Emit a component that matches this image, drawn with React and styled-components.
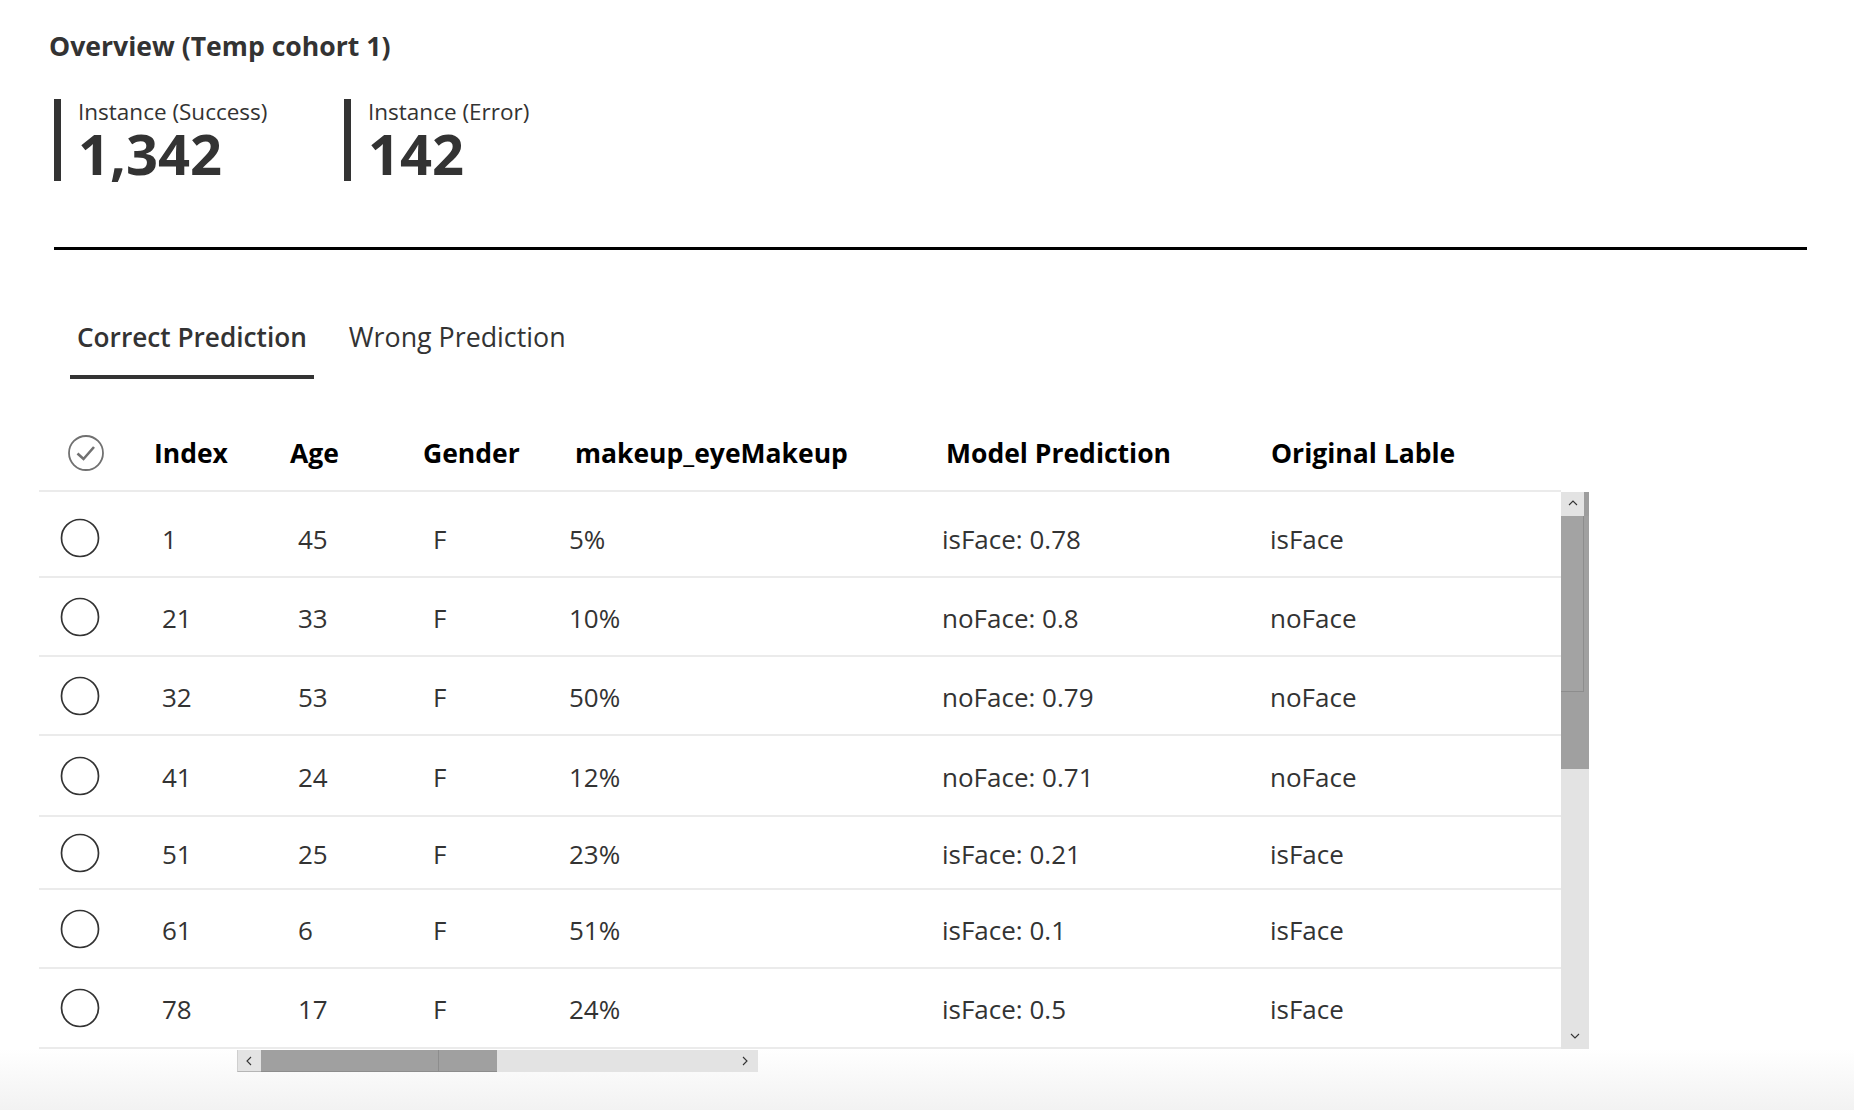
import React from "react";
import styled, { createGlobalStyle } from "styled-components";

const GlobalStyle = createGlobalStyle`
  html, body {
    margin: 0;
    padding: 0;
    background: #fff;
  }
  body {
    font-family: "Open Sans", "Noto Sans", sans-serif;
    color: #333;
  }
`;

const rows = [
  { id: 1, age: 45, gender: "F", makeup: "5%", pred: "isFace: 0.78", label: "isFace", h: 78 },
  { id: 21, age: 33, gender: "F", makeup: "10%", pred: "noFace: 0.8", label: "noFace", h: 79 },
  { id: 32, age: 53, gender: "F", makeup: "50%", pred: "noFace: 0.79", label: "noFace", h: 79 },
  { id: 41, age: 24, gender: "F", makeup: "12%", pred: "noFace: 0.71", label: "noFace", h: 81 },
  { id: 51, age: 25, gender: "F", makeup: "23%", pred: "isFace: 0.21", label: "isFace", h: 73 },
  { id: 61, age: 6, gender: "F", makeup: "51%", pred: "isFace: 0.1", label: "isFace", h: 79 },
  { id: 78, age: 17, gender: "F", makeup: "24%", pred: "isFace: 0.5", label: "isFace", h: 80 },
];

const CheckCircle = () => (
  <svg width="38" height="38" viewBox="0 0 38 38">
    <circle cx="19" cy="19" r="17" fill="none" stroke="#717171" strokeWidth="1.8" />
    <path d="M10.5 19.5 L16.5 25 L27 13" fill="none" stroke="#717171" strokeWidth="2.6" />
  </svg>
);

const EmptyCircle = () => (
  <svg width="40" height="40" viewBox="0 0 40 40">
    <circle cx="20" cy="20" r="18.5" fill="none" stroke="#333" strokeWidth="1.7" />
  </svg>
);

const Caret = ({ dir }) => {
  const d = {
    up: "M1 6 L5 2 L9 6",
    down: "M1 2 L5 6 L9 2",
    left: "M6 1 L2 5 L6 9",
    right: "M2 1 L6 5 L2 9",
  }[dir];
  return (
    <svg width="10" height="10" viewBox="0 0 10 10">
      <path d={d} fill="none" stroke="#333" strokeWidth="1.1" />
    </svg>
  );
};

const App = () => {
  return (
    <Page>
      <GlobalStyle />
      <Title>Overview (Temp cohort 1)</Title>
      <Stats>
        <Stat>
          <StatLabel>Instance (Success)</StatLabel>
          <StatValue>1,342</StatValue>
        </Stat>
        <Stat>
          <StatLabel>Instance (Error)</StatLabel>
          <StatValue>142</StatValue>
        </Stat>
      </Stats>
      <Divider />
      <Tabs>
        <Tab $active>Correct Prediction</Tab>
        <Tab>Wrong Prediction</Tab>
      </Tabs>
      <Table>
        <HeadRow>
          <SelectCell $pad={28}>
            <CheckCircle />
          </SelectCell>
          <HeadCell>Index</HeadCell>
          <HeadCell>Age</HeadCell>
          <HeadCell>Gender</HeadCell>
          <HeadCell>makeup_eyeMakeup</HeadCell>
          <HeadCell>Model Prediction</HeadCell>
          <HeadCell>Original Lable</HeadCell>
        </HeadRow>
        <BodyWrap>
          <Rows>
            {rows.map((r) => (
              <Row key={r.id} $h={r.h}>
                <SelectCell $pad={21}>
                  <EmptyCircle />
                </SelectCell>
                <Cell>{r.id}</Cell>
                <Cell>{r.age}</Cell>
                <Cell>{r.gender}</Cell>
                <Cell>{r.makeup}</Cell>
                <Cell>{r.pred}</Cell>
                <Cell>{r.label}</Cell>
              </Row>
            ))}
          </Rows>
          <VScroll>
            <VButton $strip>
              <Caret dir="up" />
            </VButton>
            <VThumbArea>
              <VThumb />
            </VThumbArea>
            <Track />
            <VButton>
              <Caret dir="down" />
            </VButton>
          </VScroll>
        </BodyWrap>
      </Table>
      <Footer>
        <HScroll>
          <HButton $edge>
            <Caret dir="left" />
          </HButton>
          <HThumb>
            <HThumbPart />
          </HThumb>
          <Track />
          <HButton>
            <Caret dir="right" />
          </HButton>
        </HScroll>
      </Footer>
    </Page>
  );
};

export default App;

const Page = styled.div`
  width: 1854px;
  height: 1110px;
  display: flex;
  flex-direction: column;
  overflow: hidden;
`;

const Title = styled.h2`
  margin: 30px 0 0 49px;
  font-size: 26.6px;
  font-weight: 700;
  line-height: 32px;
  color: #333;
`;

const Stats = styled.div`
  display: flex;
  margin: 37px 0 0 54px;
`;

const Stat = styled.div`
  width: 266px;
  border-left: 7px solid #333;
  padding-left: 17px;
`;

const StatLabel = styled.div`
  font-size: 22.5px;
  line-height: 26px;
  color: #333;
`;

const StatValue = styled.div`
  font-size: 56px;
  font-weight: 700;
  line-height: 56px;
  color: #333;
`;

const Divider = styled.div`
  margin: 66px 0 0 54px;
  width: 1753px;
  height: 3px;
  background: #000;
`;

const Tabs = styled.div`
  display: flex;
  gap: 28px;
  margin: 69px 0 0 70px;
`;

const Tab = styled.div`
  padding: 0 7px 20px;
  font-size: ${(p) => (p.$active ? "26.2px" : "26.8px")};
  line-height: 36px;
  color: #333;
  font-weight: ${(p) => (p.$active ? 600 : 400)};
  border-bottom: 4px solid ${(p) => (p.$active ? "#333" : "transparent")};
`;

const Table = styled.div`
  margin: 37px 0 0 39px;
  width: 1550px;
`;

const HeadRow = styled.div`
  display: grid;
  grid-template-columns: 115px 136px 133px 152px 371px 325px 1fr;
  align-items: center;
  width: 1522px;
  height: 74px;
  border-bottom: 2px solid #ebebeb;
`;

const HeadCell = styled.div`
  font-size: 26.5px;
  font-weight: 700;
  color: #000;
  white-space: nowrap;
`;

const SelectCell = styled.div`
  display: flex;
  align-items: center;
  padding-left: ${(p) => p.$pad}px;
`;

const BodyWrap = styled.div`
  display: flex;
`;

const Rows = styled.div`
  width: 1522px;
  padding-top: 8px;
`;

const Row = styled.div`
  display: grid;
  grid-template-columns: 123px 136px 135px 136px 373px 328px 1fr;
  align-items: center;
  box-sizing: border-box;
  height: ${(p) => p.$h}px;
  border-bottom: 2px solid #ebebeb;
`;

const Cell = styled.div`
  font-size: 26px;
  color: #333;
  white-space: nowrap;
  padding-top: 2px;
`;

const VScroll = styled.div`
  width: 28px;
  display: flex;
  flex-direction: column;
  background: #e3e3e3;
`;

const VButton = styled.div`
  height: 24px;
  display: flex;
  align-items: center;
  justify-content: center;
  box-sizing: border-box;
  border-right: ${(p) => (p.$strip ? "5px solid #9d9d9d" : "0")};
`;

const VThumbArea = styled.div`
  height: 253px;
  background: #a0a0a0;
`;

const VThumb = styled.div`
  width: 22px;
  height: 175px;
  border-right: 1px solid #8d8d8d;
  border-bottom: 1px solid #8d8d8d;
  background: #a3a3a3;
`;

const Track = styled.div`
  flex: 1;
`;

const Footer = styled.div`
  flex: 1;
  background: linear-gradient(#ffffff, #f2f2f2);
  padding-top: 1px;
`;

const HScroll = styled.div`
  display: flex;
  margin-left: 237px;
  width: 521px;
  height: 22px;
  background: #e3e3e3;
`;

const HButton = styled.div`
  width: 24px;
  display: flex;
  align-items: center;
  justify-content: center;
  box-sizing: border-box;
  border-bottom: ${(p) => (p.$edge ? "1px solid #b5b5b5" : "0")};
  border-left: ${(p) => (p.$edge ? "1px solid #cfcfcf" : "0")};
`;

const HThumb = styled.div`
  width: 236px;
  background: #a0a0a0;
  border-bottom: 1px solid #8d8d8d;
  box-sizing: border-box;
`;

const HThumbPart = styled.div`
  width: 178px;
  height: 100%;
  border-right: 1px solid #8d8d8d;
  box-sizing: border-box;
`;
